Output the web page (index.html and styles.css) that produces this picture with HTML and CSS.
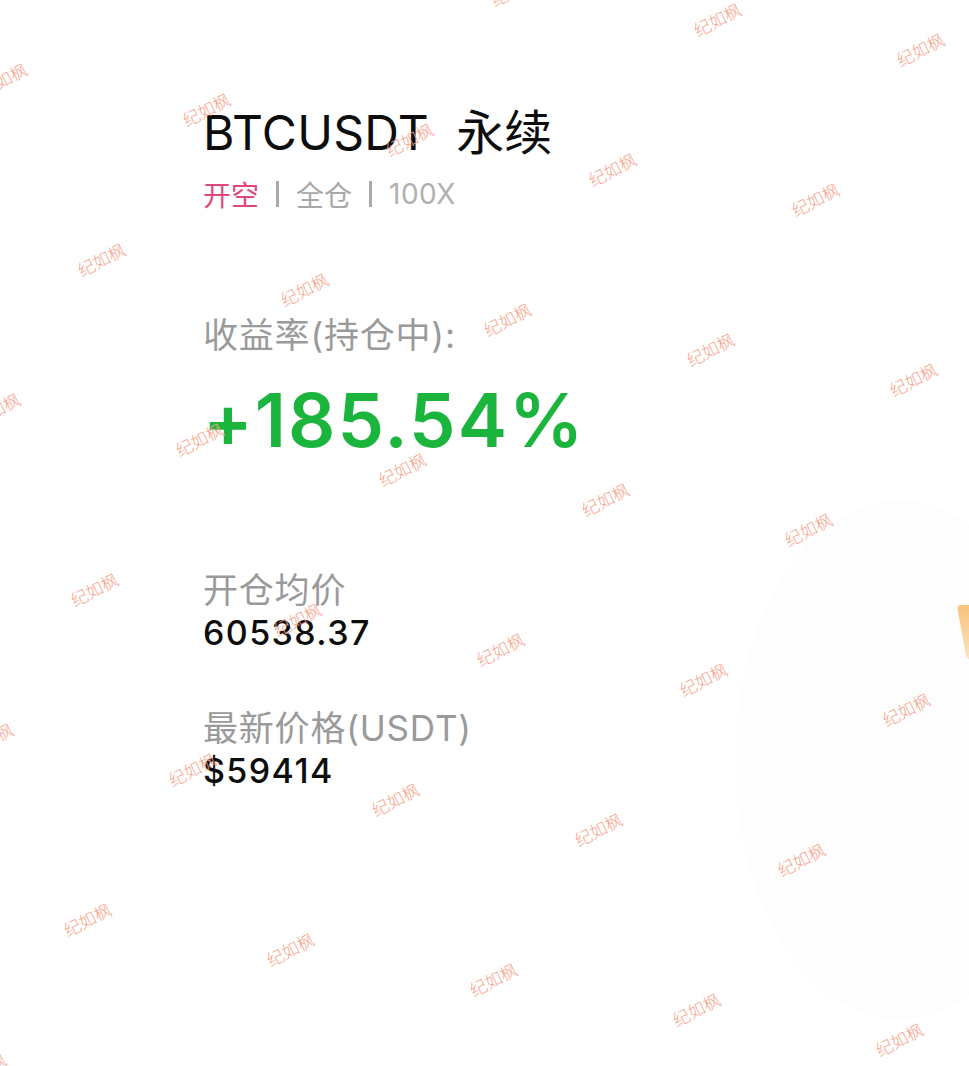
FILE: index.html
```html
<!DOCTYPE html>
<html>
  <head>
    <meta charset="UTF-8" />
    <title>BTCUSDT 永续</title>
    <link rel="stylesheet" href="styles.css">
  </head>
  <body>
    <div class="page">
      <div class="bg-shape"></div>
      <div class="bg-tip"></div>

      <div class="card">
        <div class="title">
          <span class="symbol">BTCUSDT</span><span class="kind">永续</span>
        </div>
        <div class="tags">
          <span class="side">开空</span>
          <span class="sep"></span>
          <span class="tag">全仓</span>
          <span class="sep"></span>
          <span class="tag lever">100X</span>
        </div>

        <div class="profit">
          <div class="label">收益率(持仓中):</div>
          <div class="rate">+185.54%</div>
        </div>

        <div class="field">
          <div class="label">开仓均价</div>
          <div class="value">60538.37</div>
        </div>
        <div class="field">
          <div class="label">最新价格(USDT)</div>
          <div class="value">$59414</div>
        </div>
      </div>

      <div class="watermark" id="watermark"></div>
    </div>
    <script>
      // 水印按斜向网格铺满整页
      const layer = document.getElementById("watermark");
      for (let j = -2; j < 10; j++) {
        for (let i = -3; i < 9; i++) {
          const x = 206 + i * 203 - j * 105;
          const y = 109 + i * 30 + j * 150;
          if (x < -60 || x > 1030 || y < -40 || y > 1110) continue;
          const s = document.createElement("span");
          s.className = "wm";
          s.textContent = "纪如枫";
          s.style.left = x + "px";
          s.style.top = y + "px";
          layer.appendChild(s);
        }
      }
    </script>
  </body>
</html>
```

FILE: styles.css
```css
html, body {
  margin: 0;
  padding: 0;
  background-color: #fff;
}

body {
  font-family: "Inter", "Noto Sans CJK SC", sans-serif;
}

.page {
  position: relative;
  width: 969px;
  height: 1066px;
  overflow: hidden;
}

/* faint artwork on the right side */
.bg-shape {
  position: absolute;
  left: 735px;
  top: 500px;
  width: 330px;
  height: 520px;
  border-radius: 50%;
  background-color: #fdfdfd;
}

.bg-tip {
  position: absolute;
  left: 962px;
  top: 605px;
  width: 14px;
  height: 58px;
  border-radius: 4px 0 0 10px;
  background: linear-gradient(180deg, #f7c27a, #fbe6c6);
  transform: skewX(10deg);
}

.card {
  position: relative;
  padding: 102px 0 0 203px;
}

.title {
  display: flex;
  align-items: baseline;
  font-size: 48px;
  line-height: 54px;
  color: #0d0d0d;
}

.symbol {
  letter-spacing: 0.3px;
}

.kind {
  margin-left: 27px;
  font-family: "Noto Sans CJK SC", sans-serif;
}

.tags {
  display: flex;
  align-items: center;
  margin-top: 18px;
  font-size: 28px;
  line-height: 32px;
  color: #a8a8a8;
}

.side {
  color: #e0477d;
  font-family: "Noto Sans CJK SC", sans-serif;
}

.tag {
  font-family: "Noto Sans CJK SC", sans-serif;
}

.tag.lever {
  font-family: "Inter", sans-serif;
  color: #b0b0b0;
  letter-spacing: 0.5px;
}

.sep {
  width: 3px;
  height: 26px;
  margin: 0 17px;
  background-color: #aaa;
}

.profit {
  margin-top: 103px;
}

.label {
  font-size: 35px;
  line-height: 44px;
  letter-spacing: 0.8px;
  color: #9a9a9a;
}

.rate {
  margin-top: 23px;
  font-size: 74px;
  line-height: 80px;
  font-weight: 600;
  letter-spacing: 2px;
  color: #1bb53e;
}

.profit + .field {
  margin-top: 108px;
}

.field + .field {
  margin-top: 53px;
}

.value {
  margin-top: 1px;
  font-size: 34px;
  line-height: 40px;
  font-weight: 500;
  letter-spacing: 1.4px;
  color: #0d0d0d;
}

.watermark {
  position: absolute;
  inset: 0;
  pointer-events: none;
}

.wm {
  position: absolute;
  transform: translate(-50%, -50%) rotate(-27deg);
  font-family: "Noto Sans CJK SC", sans-serif;
  font-size: 17px;
  font-weight: 300;
  color: #f6a28a;
  white-space: nowrap;
}
```
